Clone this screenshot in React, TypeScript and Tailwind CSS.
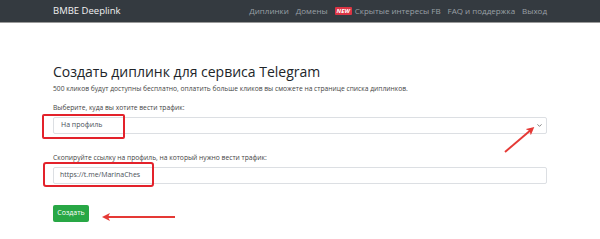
import { ChevronDown } from 'lucide-react';

const navLinks = ['Диплинки', 'Домены'];

function Navbar() {
  return (
    <nav className="flex h-[23px] items-center justify-between border-b border-[#9a9a9a] bg-[#343a40] px-[53px]">
      <span className="text-[9.5px] text-[#f0f0f0]">BMBE Deeplink</span>
      <div className="flex items-center gap-[7px] text-[8px] text-[#9aa0a6]">
        {navLinks.map((link) => (
          <span key={link}>{link}</span>
        ))}
        <span className="flex items-center gap-[3px]">
          <span className="rounded-[1px] bg-[#dc3545] px-[2px] text-[6px] font-bold italic leading-[8px] text-white">
            NEW
          </span>
          Скрытые интересы FB
        </span>
        <span>FAQ и поддержка</span>
        <span>Выход</span>
      </div>
    </nav>
  );
}

function App() {
  return (
    <div className="relative h-[239px] w-[600px] overflow-hidden bg-white font-['Open_Sans',sans-serif] text-[#212529]">
      <Navbar />

      <main className="px-[53px] pt-[40px]">
        <h1 className="text-[14px] font-medium leading-[18px] text-[#212529]">
          Создать диплинк для сервиса Telegram
        </h1>
        <p className="mt-[3px] text-[6.7px] leading-[10px] text-[#444]">
          500 кликов будут доступны бесплатно, оплатить больше кликов вы сможете на странице списка диплинков.
        </p>

        <label className="mt-[9px] block text-[6.7px] leading-[10px] text-[#444]">
          Выберите, куда вы хотите вести трафик:
        </label>
        <div className="relative mt-[4px]">
          <div className="flex h-[17px] items-center justify-between rounded-[2px] border border-[#dcdfe3] pl-[7px] pr-[3px] text-[7px] text-[#495057]">
            <span>На профиль</span>
            <ChevronDown size={7} strokeWidth={2.5} className="text-[#555]" />
          </div>
          <div className="absolute left-[-11px] top-[-3px] h-[25px] w-[83px] rounded-[2px] border-[2.5px] border-[#e3222b]" />
        </div>

        <label className="mt-[19px] block text-[6.7px] leading-[10px] text-[#444]">
          Скопируйте ссылку на профиль, на который нужно вести трафик:
        </label>
        <div className="relative mt-[4px]">
          <div className="flex h-[17px] items-center rounded-[2px] border border-[#dcdfe3] pl-[6px] text-[7px] text-[#495057]">
            https://t.me/MarinaChes
          </div>
          <div className="absolute left-[-10px] top-[-5px] h-[25px] w-[111px] rounded-[3px] border-[2.5px] border-[#e3222b]" />
        </div>

        <button className="mt-[21px] flex h-[17px] w-[36px] items-center justify-center rounded-[2px] bg-[#28a745] text-[7px] text-white">
          Создать
        </button>
      </main>

      <svg className="pointer-events-none absolute inset-0" width="600" height="239">
        <defs>
          <marker id="head" markerWidth="4" markerHeight="4" refX="2.5" refY="2" orient="auto">
            <path d="M0,0 L4,2 L0,4 L1,2 Z" fill="#e53935" />
          </marker>
        </defs>
        <line x1="505" y1="152" x2="532" y2="129" stroke="#e53935" strokeWidth="2" markerEnd="url(#head)" />
        <line x1="175" y1="217" x2="105" y2="217" stroke="#e53935" strokeWidth="2" markerEnd="url(#head)" />
      </svg>
    </div>
  );
}

export default App;
